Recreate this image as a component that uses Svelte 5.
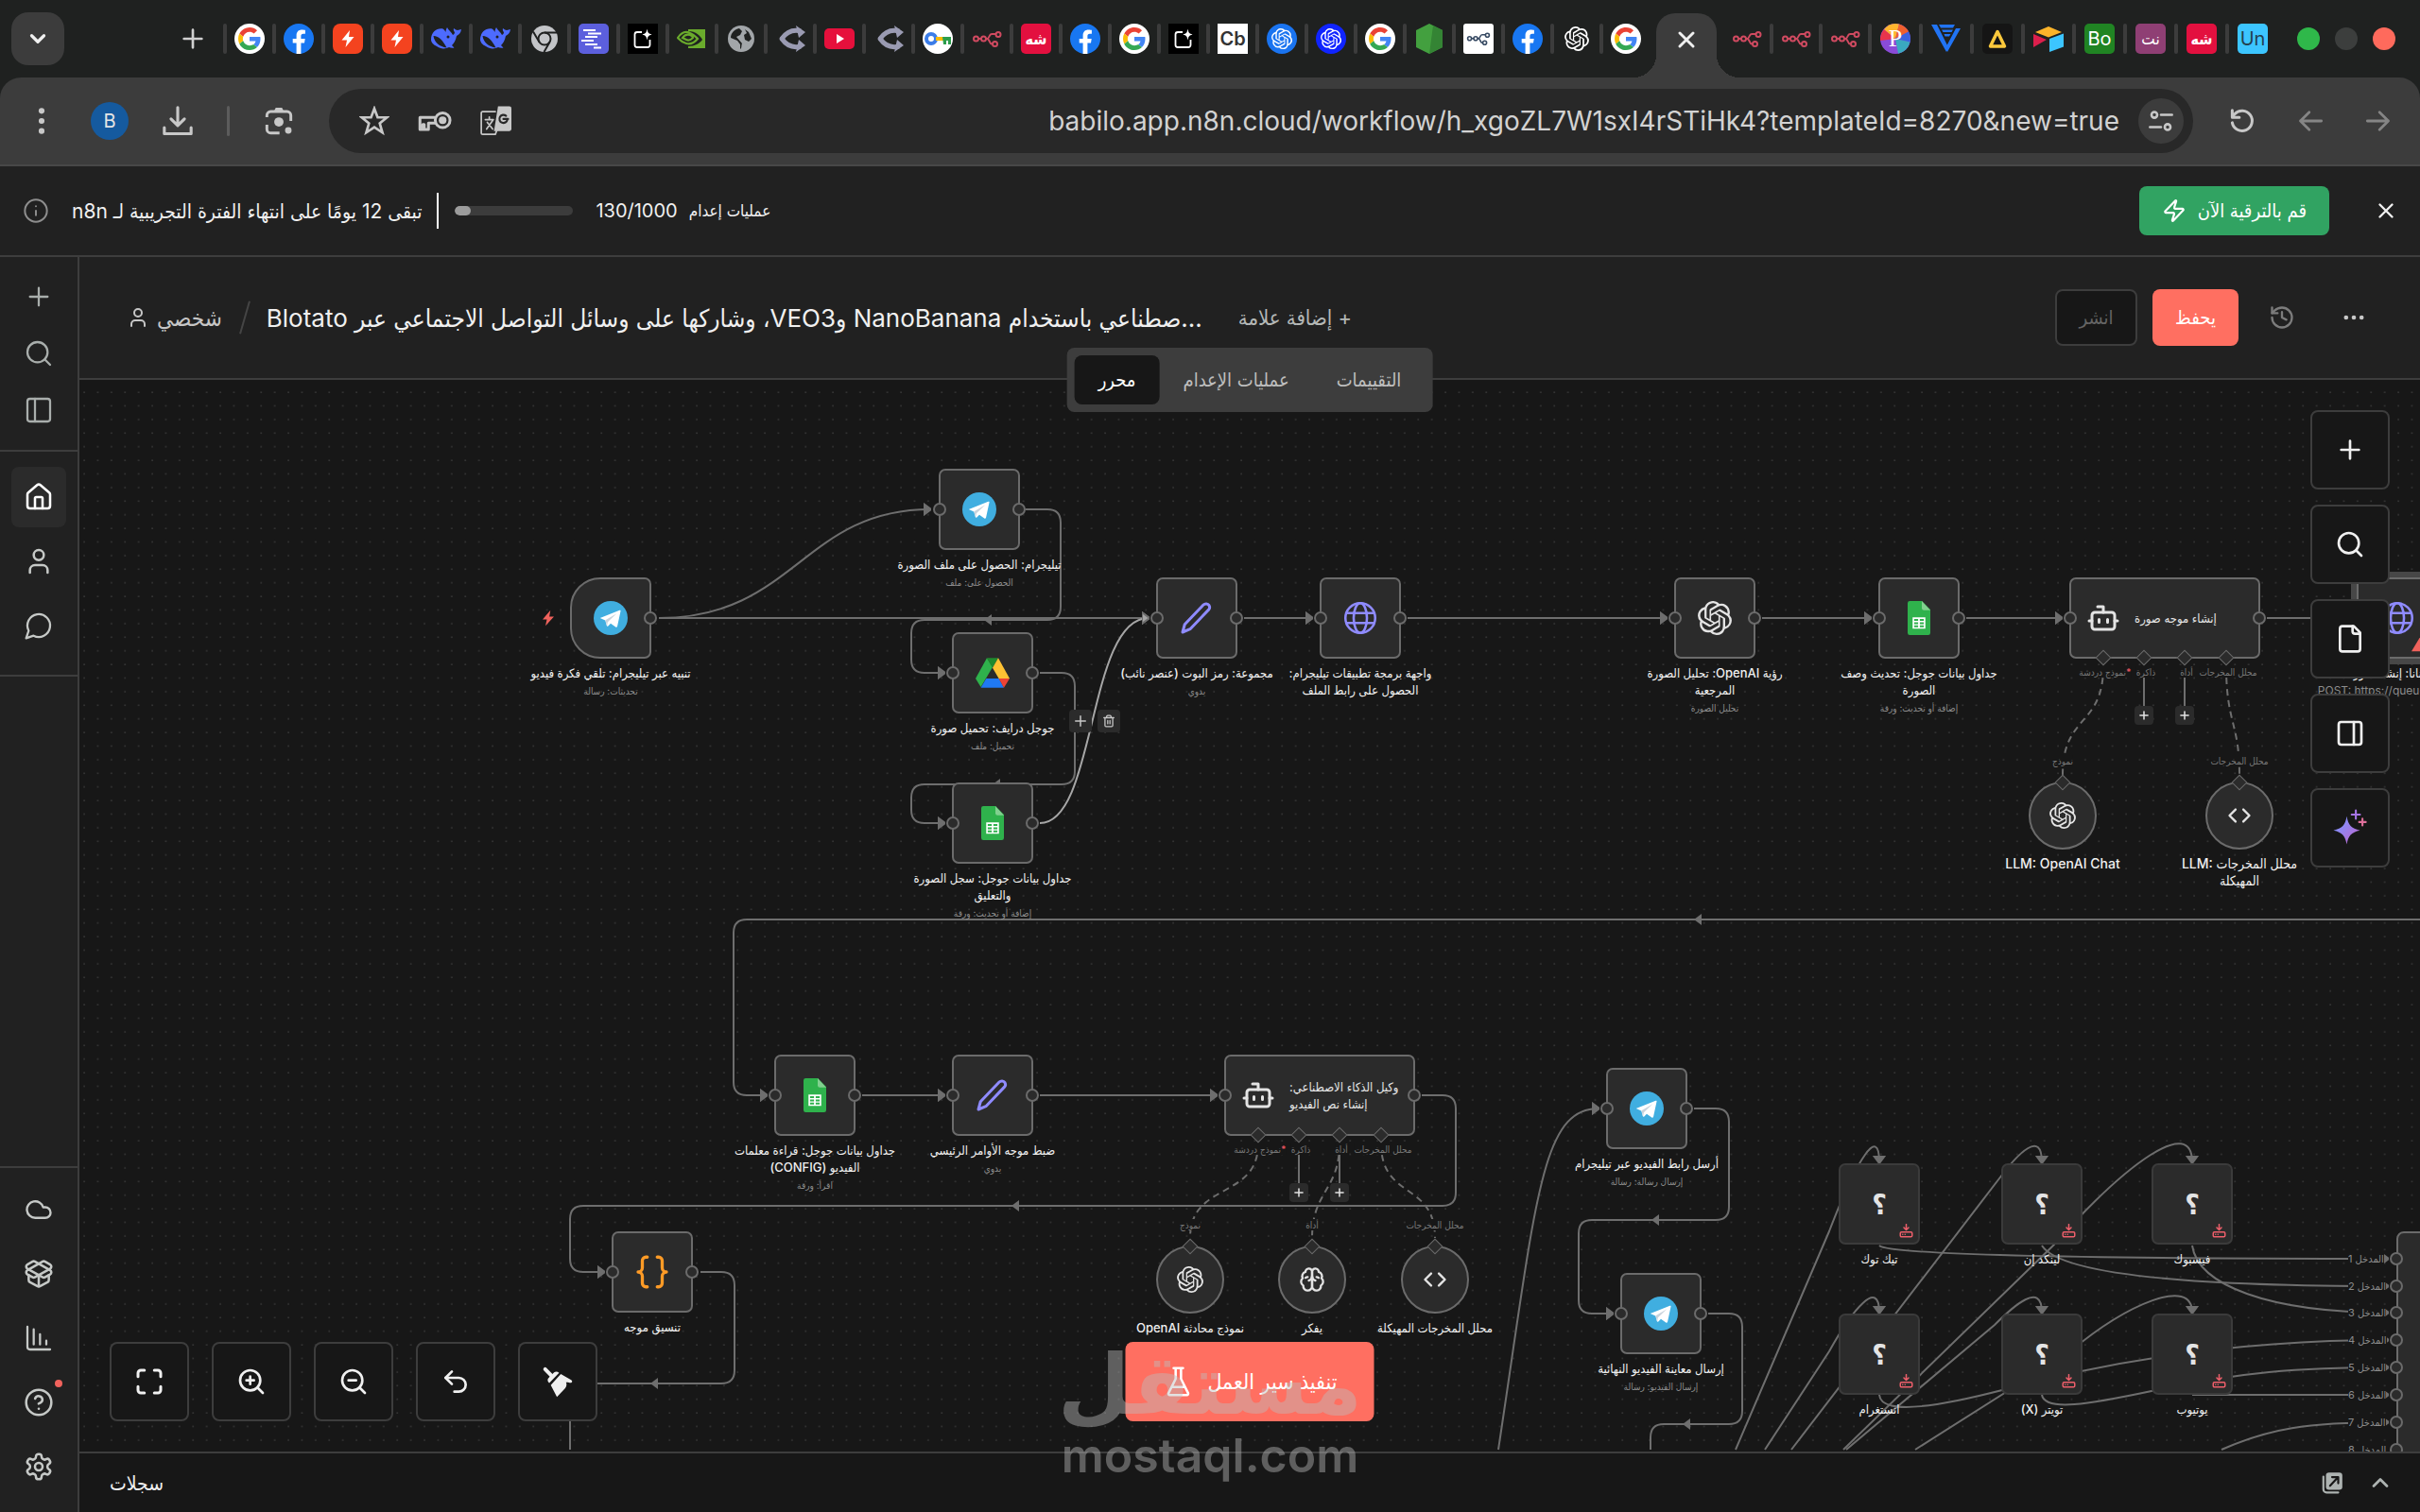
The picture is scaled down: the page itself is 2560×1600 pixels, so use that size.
<script lang="ts">
  type Node = {
    kind?: 'trigger' | 'agent' | 'missing' | 'circle' | 'selected';
    x: number;
    y: number;
    icon?: string;
    label?: string;
    dir?: 'ltr' | 'rtl';
    sub?: string;
    title?: string;
    port?: string;
  };

  const openai =
    '<path fill="currentColor" stroke="none" d="M22.2819 9.8211a5.9847 5.9847 0 0 0-.5157-4.9108 6.0462 6.0462 0 0 0-6.5098-2.9A6.0651 6.0651 0 0 0 4.9807 4.1818a5.9847 5.9847 0 0 0-3.9977 2.9 6.0462 6.0462 0 0 0 .7427 7.0966 5.98 5.98 0 0 0 .511 4.9107 6.051 6.051 0 0 0 6.5146 2.9001A5.9847 5.9847 0 0 0 13.2599 24a6.0557 6.0557 0 0 0 5.7718-4.2058 5.9894 5.9894 0 0 0 3.9977-2.9001 6.0557 6.0557 0 0 0-.7475-7.0729zm-9.022 12.6081a4.4755 4.4755 0 0 1-2.8764-1.0408l.1419-.0804 4.7783-2.7582a.7948.7948 0 0 0 .3927-.6813v-6.7369l2.02 1.1686a.071.071 0 0 1 .038.052v5.5826a4.504 4.504 0 0 1-4.4945 4.4944zm-9.6607-4.1254a4.4708 4.4708 0 0 1-.5346-3.0137l.142.0852 4.783 2.7582a.7712.7712 0 0 0 .7806 0l5.8428-3.3685v2.3324a.0804.0804 0 0 1-.0332.0615L9.74 19.9502a4.4992 4.4992 0 0 1-6.1408-1.6464zM2.3408 7.8956a4.485 4.485 0 0 1 2.3655-1.9728V11.6a.7664.7664 0 0 0 .3879.6765l5.8144 3.3543-2.0201 1.1685a.0757.0757 0 0 1-.071 0l-4.8303-2.7865A4.504 4.504 0 0 1 2.3408 7.872zm16.5963 3.8558L13.1038 8.364 15.1192 7.2a.0757.0757 0 0 1 .071 0l4.8303 2.7913a4.4944 4.4944 0 0 1-.6765 8.1042v-5.6772a.79.79 0 0 0-.407-.667zm2.0107-3.0231l-.142-.0852-4.7735-2.7818a.7759.7759 0 0 0-.7854 0L9.409 9.2297V6.8974a.0662.0662 0 0 1 .0284-.0615l4.8303-2.7866a4.4992 4.4992 0 0 1 6.6802 4.66zM8.3065 12.863l-2.02-1.1638a.0804.0804 0 0 1-.038-.0567V6.0742a4.4992 4.4992 0 0 1 7.3757-3.4537l-.142.0805L8.704 5.459a.7948.7948 0 0 0-.3927.6813zm1.0976-2.3654l2.602-1.4998 2.6069 1.4998v2.9994l-2.5974 1.4997-2.6067-1.4997Z"/>';

  // 24x24 stroke icons
  const icons: Record<string, string> = {
    plus: '<path d="M5 12h14M12 5v14"/>',
    search: '<circle cx="11" cy="11" r="8"/><path d="m21 21-4.3-4.3"/>',
    panelLeft: '<rect x="3" y="3" width="18" height="18" rx="2"/><path d="M9 3v18"/>',
    panelRight: '<rect x="3" y="3" width="18" height="18" rx="2"/><path d="M15 3v18"/>',
    home: '<path d="M15 21v-8a1 1 0 0 0-1-1h-4a1 1 0 0 0-1 1v8"/><path d="M3 10a2 2 0 0 1 .709-1.528l7-5.999a2 2 0 0 1 2.582 0l7 5.999A2 2 0 0 1 21 10v9a2 2 0 0 1-2 2H5a2 2 0 0 1-2-2z"/>',
    user: '<path d="M19 21v-2a4 4 0 0 0-4-4H9a4 4 0 0 0-4 4v2"/><circle cx="12" cy="7" r="4"/>',
    chat: '<path d="M7.9 20A9 9 0 1 0 4 16.1L2 22Z"/>',
    cloud: '<path d="M17.5 19H9a7 7 0 1 1 6.71-9h1.79a4.5 4.5 0 1 1 0 9Z"/>',
    box: '<path d="M12 22v-9"/><path d="M15.17 2.21a1.67 1.67 0 0 1 1.63 0L21 4.57a1.93 1.93 0 0 1 0 3.36L8.82 14.79a1.655 1.655 0 0 1-1.64 0L3 12.43a1.93 1.93 0 0 1 0-3.36z"/><path d="M20 13v3.87a2.06 2.06 0 0 1-1.11 1.83l-6 3.08a1.93 1.93 0 0 1-1.78 0l-6-3.08A2.06 2.06 0 0 1 4 16.87V13"/><path d="M21 12.43a1.93 1.93 0 0 0 0-3.36L8.83 2.2a1.64 1.64 0 0 0-1.63 0L3 4.57a1.93 1.93 0 0 0 0 3.36l12.18 6.86a1.636 1.636 0 0 0 1.63 0z"/>',
    chart: '<path d="M3 3v16a2 2 0 0 0 2 2h16"/><path d="M8 17V5M13 17V9M18 17v-3"/>',
    help: '<circle cx="12" cy="12" r="10"/><path d="M9.09 9a3 3 0 0 1 5.83 1c0 2-3 3-3 3"/><path d="M12 17h.01"/>',
    gear: '<path d="M12.22 2h-.44a2 2 0 0 0-2 2v.18a2 2 0 0 1-1 1.73l-.43.25a2 2 0 0 1-2 0l-.15-.08a2 2 0 0 0-2.73.73l-.22.38a2 2 0 0 0 .73 2.73l.15.1a2 2 0 0 1 1 1.72v.51a2 2 0 0 1-1 1.74l-.15.09a2 2 0 0 0-.73 2.73l.22.38a2 2 0 0 0 2.73.73l.15-.08a2 2 0 0 1 2 0l.43.25a2 2 0 0 1 1 1.73V20a2 2 0 0 0 2 2h.44a2 2 0 0 0 2-2v-.18a2 2 0 0 1 1-1.73l.43-.25a2 2 0 0 1 2 0l.15.08a2 2 0 0 0 2.73-.73l.22-.39a2 2 0 0 0-.73-2.73l-.15-.08a2 2 0 0 1-1-1.74v-.5a2 2 0 0 1 1-1.74l.15-.09a2 2 0 0 0 .73-2.73l-.22-.38a2 2 0 0 0-2.73-.73l-.15.08a2 2 0 0 1-2 0l-.43-.25a2 2 0 0 1-1-1.73V4a2 2 0 0 0-2-2z"/><circle cx="12" cy="12" r="3"/>',
    note: '<path d="M15 2H6a2 2 0 0 0-2 2v16a2 2 0 0 0 2 2h12a2 2 0 0 0 2-2V7Z"/><path d="M14 2v4a2 2 0 0 0 2 2h4"/>',
    sparkles: '<path fill="url(#spark)" stroke="none" d="M10 5c.9 5.3 2.7 7.3 8 8.5-5.3 1.2-7.1 3.2-8 8.5-.9-5.3-2.7-7.3-8-8.5 5.3-1.2 7.1-3.2 8-8.5z"/><g stroke-width="1.2"><path stroke="#a775e8" d="M15.5 1.500v5M13 4h5"/><path stroke="#e0709b" d="M19.500 6.500v4M17.500 8.500h4"/></g>',
    fit: '<path d="M4 8.5V6a2 2 0 0 1 2-2h2.5M15.5 4H18a2 2 0 0 1 2 2v2.5M20 15.5V18a2 2 0 0 1-2 2h-2.5M8.5 20H6a2 2 0 0 1-2-2v-2.5"/>',
    zoomIn: '<circle cx="11" cy="11" r="8"/><path d="m21 21-4.3-4.3M11 8v6M8 11h6"/>',
    zoomOut: '<circle cx="11" cy="11" r="8"/><path d="m21 21-4.3-4.3M8 11h6"/>',
    undo: '<path d="M9 14 4 9l5-5"/><path d="M4 9h10.5a5.5 5.5 0 0 1 0 11H11"/>',
    broom: '<path stroke-width="2.8" d="m2.600 2.800 5 5"/><path fill="currentColor" stroke="none" d="M4.500 10.800c0-1 .8-1.500 1.500-2.500l3.300-3.200c1.200-.9 2.700-.6 3.700.3L5.700 13c-.8-.5-1.200-1.300-1.200-2.200zM14.300 6.400l7.700 4.400c1.300.8.8 2.100-.4 2.100-1 .100-2-.7-3.400-.300.7 1.500.4 3-.600 4.300l-6.200 6.500-4.600-8.700z"/>',
    info: '<circle cx="12" cy="12" r="10"/><path d="M12 16v-4M12 8h.01"/>',
    zap: '<path d="M4 14a1 1 0 0 1-.78-1.63l9.9-10.2a.5.5 0 0 1 .86.46l-1.92 6.02A1 1 0 0 0 13 10h7a1 1 0 0 1 .78 1.63l-9.9 10.2a.5.5 0 0 1-.86-.46l1.92-6.02A1 1 0 0 0 11 14z"/>',
    close: '<path d="M18 6 6 18M6 6l12 12"/>',
    history: '<path d="M3 12a9 9 0 1 0 9-9 9.75 9.75 0 0 0-6.74 2.74L3 8"/><path d="M3 3v5h5M12 7v5l4 2"/>',
    dots: '<g fill="currentColor" stroke="none"><circle cx="5" cy="12" r="2"/><circle cx="12" cy="12" r="2"/><circle cx="19" cy="12" r="2"/></g>',
    kebab: '<g fill="currentColor" stroke="none"><circle cx="12" cy="4" r="2.3"/><circle cx="12" cy="12" r="2.3"/><circle cx="12" cy="20" r="2.3"/></g>',
    flask: '<path d="M10 2v7.53a2 2 0 0 1-.21.9L4.72 20.55a1 1 0 0 0 .9 1.45h12.76a1 1 0 0 0 .9-1.45l-5.07-10.12a2 2 0 0 1-.21-.9V2M8.5 2h7M7 16h10"/>',
    chevronDown: '<path d="m6 9 6 6 6-6"/>',
    chevronUp: '<path d="m6 15 6-6 6 6"/>',
    popout: '<rect x="6" y="2" width="16" height="17" rx="3" fill="#adb3b1" stroke="none"/><path d="M3.5 6v12.5a3 3 0 0 0 3 3H18"/><path stroke="#171717" d="m10 15 7.5-8M12 6.5h6v6"/>',
    download: '<path d="M12 2v13M7 10.5l5 5 5-5M2 17v4.5h20V17"/>',
    lens: '<path d="M2.500 9V7.500a3 3 0 0 1 3-3h13a3 3 0 0 1 3 3V12M2.500 15v3.500a3 3 0 0 0 3 3h7" stroke-linecap="butt"/><path fill="currentColor" stroke="none" d="M8 4.500 9.500 1.500h5L16 4.500z"/><circle cx="12" cy="12.800" r="3.700" fill="currentColor" stroke="none"/><circle cx="19.500" cy="19.500" r="2.600" fill="currentColor" stroke="none"/>',
    star: '<path d="m12 2.200 2.600 7H22l-5.700 4.700 2.100 7.300-6.400-4.200-6.400 4.200 2.100-7.300L2 9.200h7.400z" stroke-linejoin="miter"/>',
    key: '<circle cx="17.500" cy="11.500" r="5.200"/><circle cx="17.500" cy="11.500" r="2.700" fill="currentColor" stroke="none"/><path d="M12 9.500H1.500v8.500h2v-3.500h1V18h3v-4.500H12"/>',
    translate: '<path d="M12 5H2.500a1 1 0 0 0-1 1v15a1 1 0 0 0 1 1h9.500l1.500-4M4.500 11h6M7.500 9v2M5.500 18l5-7M6 13l4 5" stroke-width="1.200"/><path fill="currentColor" stroke="none" d="M14 1h8.500A1.500 1.500 0 0 1 24 2.500V18a1.500 1.500 0 0 1-1.500 1.500H11z"/><path stroke="#282828" stroke-width="1.500" d="M21.500 10.500h-3.500M21 11a3 3 0 1 1-1-2.800"/>',
    tune: '<circle cx="6" cy="6.5" r="2.6"/><path d="M12 6.5h10M2 17.5h10"/><circle cx="18" cy="17.5" r="2.6"/>',
    reload: '<path d="M3.5 13.5A8.5 8.5 0 1 0 5.5 6.2L3.5 8.5M3.5 3v6h6"/>',
    back: '<path d="m11 4-8 8 8 8M3 12h19"/>',
    forward: '<path d="m13 4 8 8-8 8M21 12H2"/>',
    trash: '<path d="M3 6h18M19 6v14a2 2 0 0 1-2 2H7a2 2 0 0 1-2-2V6M8 6V4a2 2 0 0 1 2-2h4a2 2 0 0 1 2 2v2M10 11v6M14 11v6"/>',
    openai,
    telegram: '<circle cx="12" cy="12" r="12" fill="#40aee0" stroke="none"/><path fill="#fff" stroke="none" d="M4.5 12 18.3 6.5c.5-.2.9.1.7.7l-2.3 10.7c-.2.7-.7.8-1.2.5L12 15.8l-1.8 1.9c-.4.4-.9.2-1-.3L8.2 13.6z"/><path fill="#c9d3dc" stroke="none" d="m8.3 13.5 1.1 4.2.5-2.9 6.3-6z"/>',
    drive: '<g stroke="none"><path fill="#2fb24c" d="M8 1.5 0 16l3.7 6L12 8z"/><path fill="#1f8a2e" d="M8 1.5h8L12 8.5z"/><path fill="#ffc233" d="M16 1.5 24 16h-7.6L12 8.5z"/><path fill="#2079f3" d="M3.7 22.5 7.5 16h9l3.5 6.5z"/><path fill="#ee4335" d="M16.4 16H24l-4 6.5z"/></g>',
    sheets: '<g stroke="none"><path fill="#2fb24c" d="M5.500 0H14l6 6v16.500a1.500 1.500 0 0 1-1.500 1.500h-13A1.500 1.500 0 0 1 4 22.500v-21A1.500 1.500 0 0 1 5.500 0z"/><path fill="#81d08f" d="M14 0l6 6.500h-4.500A1.500 1.500 0 0 1 14 5z"/><path fill="#fff" d="M7.5 11.500h9v8h-9z"/><path fill="#2fb24c" d="M8.6 12.7h2.800v1.300H8.600zM12.600 12.700h2.800v1.300h-2.800zM8.600 15h2.800v1.300H8.600zM12.600 15h2.800v1.300h-2.800zM8.600 17.200h2.800v1.300H8.600zM12.600 17.200h2.800v1.300h-2.800z"/></g>',
    pencil: '<path stroke="#8f8bff" stroke-width="2" d="M16.7 2.7a2.6 2.6 0 0 1 4 .4 2.600 2.600 0 0 1-.3 3L7.300 19.800 2 22l1.500-5.500z"/>',
    globe: '<g stroke="#8f8bff" stroke-width="1.7"><circle cx="12" cy="12" r="10.500"/><ellipse cx="12" cy="12" rx="4.700" ry="10.500"/><path d="M2.500 8.500h19M2.500 15.500h19"/></g>',
    bot: '<path d="M12 8V4H8"/><rect x="4" y="8" width="16" height="12" rx="2"/><path d="M2 14h2M20 14h2M15 13v2M9 13v2"/>',
    code: '<path d="m8.5 6.5-5.5 5.500 5.500 5.500M15.500 6.500l5.500 5.500-5.500 5.500"/>',
    brain: '<path d="M12 5a3 3 0 1 0-5.997.125 4 4 0 0 0-2.526 5.77 4 4 0 0 0 .556 6.588A4 4 0 1 0 12 18Z"/><path d="M12 5a3 3 0 1 1 5.997.125 4 4 0 0 1 2.526 5.77 4 4 0 0 1-.556 6.588A4 4 0 1 1 12 18Z"/><path d="M15 13a4.5 4.5 0 0 1-3-4 4.500 4.500 0 0 1-3 4M6 10.500c.5-.5 1-.8 2-.8M18 10.500c-.5-.5-1-.8-2-.8"/>',
    braces: '<path stroke="#ff9b26" stroke-width="2.2" d="M8.500 1.500h-1A2.500 2.500 0 0 0 5 4v5a3 3 0 0 1-3 3 3 3 0 0 1 3 3v5a2.500 2.500 0 0 0 2.500 2.500h1M15.500 1.500h1A2.500 2.500 0 0 1 19 4v5a3 3 0 0 0 3 3 3 3 0 0 0-3 3v5a2.500 2.500 0 0 1-2.500 2.500h-1"/>',
    install: '<path d="M12 1v9M8 6.500l4 4 4-4"/><rect x="2" y="14" width="20" height="8" rx="2"/><path d="M6 18h.01M10 18h.01"/>',
    bolt: '<path fill="#f0625c" stroke="none" d="M15 1 4 14h6L8 23l12-13h-6.500z"/>',
    warning: '<path fill="#f0625c" stroke="none" d="M12 2 24 22H0z"/>',
  };

  const n8n =
    '<g fill="none" stroke="COLOR" stroke-width="2"><circle cx="4.500" cy="16" r="2.500"/><circle cx="12.500" cy="16" r="2.500"/><circle cx="28" cy="11.500" r="2.500"/><circle cx="24.500" cy="21.500" r="2.500"/><path d="M7 16h3M15 16h1c3 0 2-5 5-5h4.500M16 16c3 0 2.500 5.500 5 5.500h1"/></g>';

  // 32x32 tab favicons
  const favicons: Record<string, string> = {
    google:
      '<circle cx="16" cy="16" r="16" fill="#fff"/><g transform="translate(4 4) scale(.5)"><path fill="#EA4335" d="M24 9.5c3.54 0 6.71 1.22 9.21 3.6l6.85-6.85C35.9 2.38 30.47 0 24 0 14.62 0 6.51 5.38 2.56 13.22l7.98 6.19C12.43 13.72 17.74 9.5 24 9.5z"/><path fill="#4285F4" d="M46.98 24.55c0-1.57-.15-3.09-.38-4.55H24v9.02h12.94c-.58 2.96-2.26 5.48-4.78 7.18l7.73 6c4.51-4.18 7.09-10.36 7.09-17.65z"/><path fill="#FBBC05" d="M10.53 28.59c-.48-1.45-.76-2.99-.76-4.59s.27-3.14.76-4.59l-7.98-6.19C.92 16.46 0 20.12 0 24c0 3.88.92 7.54 2.56 10.78l7.97-6.19z"/><path fill="#34A853" d="M24 48c6.48 0 11.93-2.13 15.89-5.81l-7.73-6c-2.15 1.45-4.92 2.3-8.16 2.3-6.26 0-11.57-4.22-13.47-9.91l-7.98 6.19C6.51 42.62 14.62 48 24 48z"/></g>',
    facebook:
      '<circle cx="16" cy="16" r="16" fill="#1877f2"/><path fill="#fff" d="m22 20.500.7-4.500h-4.300v-2.900c0-1.200.6-2.400 2.500-2.400h2V6.800s-1.800-.3-3.500-.3c-3.500 0-5.800 2.100-5.800 6V16H9.700v4.500h3.900V32h4.800V20.500z"/>',
    flash: '<rect width="32" height="32" rx="8" fill="#f4431f"/><path fill="#fff" d="m18 7-8.500 10.500H15L13.500 25 22.500 14H17z"/>',
    whale:
      '<path fill="#4d6bfe" d="M0 17C0 9 6 4.500 12.500 5.500c1.500 1 2.500 2.500 3 3.500 0-1.500.5-3.500 1.500-5 1 3 5 5 6 8 1-.5 2-1.500 2-3-1-1-1.500-2.500-1-4 1.500 1 3 2 4 2 1.500 0 2.500-1 4-1-.5 4-3 6-5 7-1 5-3 8-5 10l2.500 2.500c-2 .5-4 0-5.500-.5-4 2-9 2-13-1-3.500-1.500-6-4.500-6-7z"/><path fill="#1f2120" d="M2.500 13c6 0 10 5 14 12.500C9 24.500 3.500 20 2.500 13z"/><circle cx="18" cy="14" r="1.500" fill="#1f2120"/>',
    chrome:
      '<circle cx="16" cy="16" r="14" fill="#c3c5c8"/><circle cx="16" cy="16" r="6.500" fill="#c3c5c8" stroke="#1f2120" stroke-width="2"/><path fill="none" stroke="#1f2120" stroke-width="2" d="M16 9.500h13M10.500 19.500 4 8.500M21.500 19.500 15.500 30"/>',
    list: '<rect width="32" height="32" rx="5" fill="#5c5fdd"/><path stroke="#fff" stroke-width="2" d="M5 7h13M10 10.500h14M7 14h13M3 18h13M7 22h13M16 25.500h8"/>',
    capture:
      '<path fill="#000" d="M0 0h32v32H0z"/><path fill="none" stroke="#fff" stroke-width="1.800" d="M15 9h-5a2.500 2.500 0 0 0-2.500 2.500v11A2.500 2.500 0 0 0 10 25h11a2.500 2.500 0 0 0 2.500-2.500V17"/><path fill="#fff" d="M20.500 5.500c.7 4 1.500 5 5 6-3.500 1-4.300 2-5 6-.7-4-1.500-5-5-6 3.500-1 4.300-2 5-6z"/>',
    nvidia:
      '<path fill="#6aab2c" d="M12 6h18v20H12z"/><path fill="#1f2120" d="M12 8c8 0 13 5 15 9-3 4-8 7-15 7z"/><path fill="none" stroke="#6aab2c" stroke-width="2.2" d="M1 15c4-6 9-7 13-5 4 1.500 6 4 8 6-4 5-8 6-12 5-5-1-7-4-9-6zM6 15c2-3 5-4 8-3 2 .8 3 2 3 3-3 3-5 3-7 2z"/>',
    world:
      '<circle cx="16" cy="16" r="14" fill="#a2a6a9"/><path fill="#1f2120" d="M14 5c-5 1-9 5-9 10l7 3 3 4v5c2-1 1-4 2-6l-6-7 4-2 2-4zM20 6l4 3 3 7-3 3-4-2-1-5 3-2z"/>',
    curved:
      '<path fill="none" stroke="#9a9bb2" stroke-width="5" stroke-linejoin="round" d="M27 8c-8-2-15 1-20 8 5 7 12 10 20 8"/><path fill="#9a9bb2" d="m22 2 10 7-7 6zM22 30l10-7-7-6z"/>',
    youtube: '<rect y="5" width="32" height="22" rx="5" fill="#e6103c"/><path fill="#fff" d="m13 11 8 5-8 5z"/>',
    passkey:
      '<circle cx="16" cy="16" r="16" fill="#fff"/><circle cx="9" cy="16" r="5" fill="none" stroke="#3b7de8" stroke-width="4"/><path fill="#fbbc05" d="M14 14h8v4h-8z"/><path fill="#2c9d4b" d="M21 14h9v8h-3v-4h-2v4h-3z"/>',
    n8n: n8n.replace('COLOR', '#cf4a60'),
    n8nLight: '<rect width="32" height="32" rx="3" fill="#fff"/><g transform="translate(3 3) scale(.8)">' + n8n.replace('COLOR', '#374a63') + '</g>',
    gptBlue: `<circle cx="16" cy="16" r="16" fill="#1a74f0"/><g color="#fff" transform="translate(5 5) scale(.92)">${openai}</g>`,
    gptNavy: `<circle cx="16" cy="16" r="16" fill="#1024ff"/><g color="#fff" transform="translate(5 5) scale(.92)">${openai}</g>`,
    gpt: `<g color="#fff" transform="translate(3 3) scale(1.08)">${openai}</g>`,
    hex: '<path fill="#43a03f" d="m16 0 14 7v18l-14 7-14-7V7z"/><path fill="#348434" d="m20 2 10 5v18l-14 7z"/>',
    prism:
      '<circle cx="16" cy="16" r="16" fill="#8a4bd8"/><path fill="#e8344c" d="M16 16 0 18A16 16 0 0 1 4 6z"/><path fill="#ffb52e" d="M16 16 4 6A16 16 0 0 1 20 .500z"/><path fill="#f0602e" d="M16 16 20 .500a16 16 0 0 1 10 8z"/><path fill="#3b62e0" d="M16 16 30 8.500a16 16 0 0 1 1.500 11z"/><path fill="#3aa9c0" d="M16 16l15.500 3.500A16 16 0 0 1 19 31.700z"/>',
    vee: '<path fill="#2174f5" d="M0 1h6l12 24-2 5zM8 1h17l-2 3.500H10zM26 5h5L17 30l-1.500-5zM11 6.500h12l-1.500 2.500h-9zM13.500 11h7L19 13.500h-4.500z"/>',
    delta: '<rect width="32" height="32" rx="5" fill="#151515"/><path fill="none" stroke="#fcc93c" stroke-width="3.500" stroke-linejoin="round" d="M16 8.500 23.500 24H8.500z"/>',
    airtable: '<path fill="#fcb42a" d="M16 3 30 9l-14 5.500L2 9z"/><path fill="#3cc5ff" d="M17 16l15-5.500v14L17 30z"/><path fill="#dc1f4c" d="M0 11l14 6-14 8z"/>',
  };

  const leftTabs = 'google facebook flash flash whale whale chrome list capture nvidia world curved youtube curved passkey n8n t:شه:red facebook google capture t:Cb:white gptBlue gptNavy google hex n8nLight facebook gpt google'.split(' ');
  const rightTabs = 'n8n n8n n8n prism vee delta airtable t:Bo:green t:نت:plum t:شه:red t:Un:sky'.split(' ');

  const agentPorts = [
    { at: 36, label: 'نموذج دردشة', required: true },
    { at: 79, label: 'ذاكرة', add: true },
    { at: 122, label: 'أداة', add: true },
    { at: 166, label: 'محلل المخرجات' },
  ];

  // x / y are the centre of each node
  const nodes: Node[] = [
    { kind: 'trigger', x: 646, y: 654, icon: 'telegram', label: 'تنبيه عبر تيليجرام: تلقي فكرة فيديو', sub: 'تحديثات: رسالة' },
    { x: 1036, y: 539, icon: 'telegram', label: 'تيليجرام: الحصول على ملف الصورة', sub: 'الحصول على: ملف' },
    { x: 1050, y: 712, icon: 'drive', label: 'جوجل درايف: تحميل صورة', sub: 'تحميل: ملف' },
    { x: 1050, y: 871, icon: 'sheets', label: 'جداول بيانات جوجل: سجل الصورة\nوالتعليق', sub: 'إضافة أو تحديث: ورقة' },
    { x: 1266, y: 654, icon: 'pencil', label: 'مجموعة: رمز البوت (عنصر نائب)', sub: 'يدوي' },
    { x: 1439, y: 654, icon: 'globe', label: 'واجهة برمجة تطبيقات تيليجرام:\nالحصول على رابط الملف' },
    { x: 1814, y: 654, icon: 'openai', label: 'رؤية OpenAI: تحليل الصورة\nالمرجعية', sub: 'تحليل الصورة' },
    { x: 2030, y: 654, icon: 'sheets', label: 'جداول بيانات جوجل: تحديث وصف\nالصورة', sub: 'إضافة أو تحديث: ورقة' },
    { kind: 'agent', x: 2290, y: 654, icon: 'bot', title: 'إنشاء موجه صورة' },
    { kind: 'selected', x: 2536, y: 654, icon: 'globe', label: 'نانو بانانا: إنشاء صورة', sub: 'POST: https://queue.fal.run/...' },
    { kind: 'circle', x: 2182, y: 863, icon: 'openai', port: 'نموذج', label: 'LLM: OpenAI Chat', dir: 'ltr' },
    { kind: 'circle', x: 2369, y: 863, icon: 'code', port: 'محلل المخرجات', label: 'LLM: محلل المخرجات\nالمهيكلة', dir: 'ltr' },
    { x: 862, y: 1159, icon: 'sheets', label: 'جداول بيانات جوجل: قراءة معلمات\nالفيديو (CONFIG)', sub: 'اقرأ: ورقة' },
    { x: 1050, y: 1159, icon: 'pencil', label: 'ضبط موجه الأوامر الرئيسي', sub: 'يدوي' },
    { kind: 'agent', x: 1396, y: 1159, icon: 'bot', title: 'وكيل الذكاء الاصطناعي:\nإنشاء نص الفيديو' },
    { kind: 'circle', x: 1259, y: 1354, icon: 'openai', port: 'نموذج', label: 'نموذج محادثة OpenAI' },
    { kind: 'circle', x: 1388, y: 1354, icon: 'brain', port: 'أداة', label: 'يفكر' },
    { kind: 'circle', x: 1518, y: 1354, icon: 'code', port: 'محلل المخرجات', label: 'محلل المخرجات المهيكلة' },
    { x: 690, y: 1346, icon: 'braces', label: 'تنسيق موجه' },
    { x: 1742, y: 1173, icon: 'telegram', label: 'أرسل رابط الفيديو عبر تيليجرام', sub: 'إرسال رسالة: رسالة' },
    { x: 1757, y: 1390, icon: 'telegram', label: 'إرسال معاينة الفيديو النهائية', sub: 'إرسال الفيديو: رسالة' },
    { kind: 'missing', x: 1988, y: 1274, label: 'تيك توك' },
    { kind: 'missing', x: 2160, y: 1274, label: 'لينكد إن' },
    { kind: 'missing', x: 2319, y: 1274, label: 'فيسبوك' },
    { kind: 'missing', x: 1988, y: 1433, label: 'انستغرام' },
    { kind: 'missing', x: 2160, y: 1433, label: 'تويتر (X)' },
    { kind: 'missing', x: 2319, y: 1433, label: 'يوتيوب' },
  ];

  // drawn with an arrow head at the end
  const arrows = [
    'M697 654C840 654 850 539 984 539',
    'M697 654H1215',
    'M1085 539H1108Q1122 539 1122 553V642Q1122 656 1108 656H978Q964 656 964 670V698Q964 712 978 712H999',
    'M1100 712H1123Q1137 712 1137 726V816Q1137 830 1123 830H978Q964 830 964 844V857Q964 871 978 871H999',
    'M1316 654H1388',
    'M1489 654H1763',
    'M1864 654H1979',
    'M2080 654H2181',
    'M2560 973H790Q776 973 776 987V1145Q776 1159 790 1159H811',
    'M912 1159H999',
    'M1100 1159H1287',
    'M1504 1159H1526Q1540 1159 1540 1173V1262Q1540 1276 1526 1276H617Q603 1276 603 1290V1332Q603 1346 617 1346H639',
    'M1585 1534C1625 1270 1630 1173 1691 1173',
    'M1792 1173H1815Q1829 1173 1829 1187V1277Q1829 1291 1815 1291H1684Q1670 1291 1670 1305V1376Q1670 1390 1684 1390H1706',
    'M1836 1534L1935 1303C1965 1225 1988 1190 1988 1230',
    'M1895 1534L2115 1247C2135 1220 2160 1195 2160 1230',
    'M1950 1534L2172 1318C2250 1230 2319 1180 2319 1230',
    'M1867 1534L1935 1430C1960 1385 1988 1352 1988 1389',
    'M1953 1534L2110 1402C2130 1382 2160 1355 2160 1389',
    'M2026 1534L2190 1430C2250 1380 2319 1350 2319 1389',
    'M1988 1318C2000 1330 2300 1332 2526 1332',
    'M2160 1318C2180 1350 2330 1361 2526 1361',
    'M2319 1318C2325 1360 2400 1389 2526 1389',
    'M1988 1476C1990 1500 2060 1486 2118 1471C2240 1438 2380 1418 2526 1418',
    'M2160 1476C2163 1494 2210 1486 2276 1472C2370 1452 2430 1447 2526 1447',
    'M2319 1476H2526',
    'M2350 1534C2400 1512 2440 1505 2526 1505',
  ];

  const plain = [
    'M741 1346H763Q777 1346 777 1360V1450Q777 1464 763 1464H617Q603 1464 603 1478V1534',
    'M1807 1390H1829Q1843 1390 1843 1404V1493Q1843 1507 1829 1507H1760Q1746 1507 1746 1521V1534',
    'M2398 654H2490',
  ];

  const dashed = [
    'M2225 705C2225 770 2182 755 2182 820',
    'M2355 705C2355 765 2369 765 2369 820',
    'M1331 1210C1331 1270 1259 1250 1259 1310',
    'M1417 1210C1417 1260 1388 1260 1388 1310',
    'M1461 1210C1461 1270 1518 1250 1518 1310',
  ];

  const midArrows = [[1041, 656], [1050, 830], [1792, 973], [1070, 1276], [688, 1464], [1747, 1291], [1780, 1507]];
  const inputs = [1332, 1361, 1389, 1418, 1447, 1476, 1505, 1534];

  let url = 'babilo.app.n8n.cloud/workflow/h_xgoZL7W1sxI4rSTiHk4?templateId=8270&new=true';
</script>

{#snippet icon(name: string, size = 32, stroke = 2)}
  <svg
    width={size}
    height={size}
    viewBox="0 0 24 24"
    fill="none"
    stroke="currentColor"
    stroke-width={stroke}
    stroke-linecap="round"
    stroke-linejoin="round"
    aria-hidden="true">{@html icons[name]}</svg
  >
{/snippet}

{#snippet favicon(name: string)}
  {#if name.startsWith('t:')}
    <span class="letters {name.split(':')[2]}">{name.split(':')[1]}</span>
  {:else}
    <svg width="32" height="32" viewBox="0 0 32 32" aria-hidden="true">{@html favicons[name]}</svg>
    {#if name === 'prism'}<span class="prism-letter">P</span>{/if}
  {/if}
{/snippet}

<div class="screen">
  <div class="tab-strip">
    <button class="tab-search" aria-label="Search tabs">{@render icon('chevronDown', 26, 3)}</button>
    <button class="new-tab" aria-label="New tab">{@render icon('plus', 32, 2)}</button>
    {#each leftTabs as tab}
      <button class="tab" aria-label="Tab">{@render favicon(tab)}</button>
    {/each}
    <button class="tab-active" aria-label="Close tab">{@render icon('close', 28, 2.5)}</button>
    {#each rightTabs as tab, i}
      <button class="tab" class:bare={i === 0} class:wide={i > 2} aria-label="Tab">{@render favicon(tab)}</button>
    {/each}
    <div class="lights">
      <span class="light go"></span>
      <span class="light idle"></span>
      <span class="light stop"></span>
    </div>
  </div>

  <div class="toolbar">
    <button class="tool" aria-label="Menu">{@render icon('kebab', 32)}</button>
    <button class="tool" aria-label="Profile"><span class="avatar">B</span></button>
    <button class="tool" aria-label="Downloads">{@render icon('download', 34, 2.2)}</button>
    <span class="tool-line"></span>
    <button class="tool" aria-label="Lens">{@render icon('lens', 32, 2.2)}</button>
    <div class="address">
      <button class="inner" aria-label="Bookmark">{@render icon('star', 32, 2)}</button>
      <button class="inner" aria-label="Passwords">{@render icon('key', 36, 2)}</button>
      <button class="inner" aria-label="Translate">{@render icon('translate', 34, 2)}</button>
      <input aria-label="Address" bind:value={url} />
      <button class="tune" aria-label="Site settings">{@render icon('tune', 28, 2.2)}</button>
    </div>
    <button class="tool" aria-label="Reload">{@render icon('reload', 30, 2.4)}</button>
    <button class="tool dim" aria-label="Back">{@render icon('back', 28, 2.4)}</button>
    <button class="tool dim" aria-label="Forward">{@render icon('forward', 28, 2.4)}</button>
  </div>

  <div class="banner">
    <span class="info">{@render icon('info', 28, 1.7)}</span>
    <span class="trial" dir="rtl">تبقى 12 يومًا على انتهاء الفترة التجريبية لـ n8n</span>
    <span class="banner-line"></span>
    <div class="progress"><div class="progress-fill" style="width: {130 / 10}%"></div></div>
    <span class="usage">130/1000</span>
    <span class="usage-label" dir="rtl">عمليات إعدام</span>
    <button class="upgrade">{@render icon('zap', 26, 2)}<span>قم بالترقية الآن</span></button>
    <button class="dismiss" aria-label="Dismiss">{@render icon('close', 26, 2.2)}</button>
  </div>

  <div class="body">
    <nav class="sidebar">
      <div class="side-group top">
        <button aria-label="Create">{@render icon('plus', 32, 1.7)}</button>
        <button aria-label="Search">{@render icon('search', 32, 1.7)}</button>
        <button aria-label="Toggle sidebar">{@render icon('panelLeft', 32, 1.7)}</button>
      </div>
      <div class="side-group main">
        <a class="current" href="#home" aria-label="Home">{@render icon('home', 32, 1.9)}</a>
        <a href="#personal" aria-label="Personal">{@render icon('user', 32, 1.9)}</a>
        <a href="#chat" aria-label="Chat">{@render icon('chat', 32, 1.7)}</a>
      </div>
      <div class="side-group bottom">
        <a href="#admin" aria-label="Cloud">{@render icon('cloud', 30, 1.9)}</a>
        <a href="#templates" aria-label="Templates">{@render icon('box', 32, 1.9)}</a>
        <a href="#insights" aria-label="Insights">{@render icon('chart', 32, 1.7)}</a>
        <a class="alert" href="#help" aria-label="Help">{@render icon('help', 32, 1.9)}</a>
        <a href="#settings" aria-label="Settings">{@render icon('gear', 32, 1.9)}</a>
      </div>
    </nav>

    <main>
      <header>
        <a class="project" href="#personal">{@render icon('user', 24, 2)}<span>شخصي</span></a>
        <span class="slash"></span>
        <h1 dir="rtl">...صطناعي باستخدام NanoBanana وVEO3، وشاركها على وسائل التواصل الاجتماعي عبر Blotato</h1>
        <button class="add-tag" dir="rtl">+ إضافة علامة</button>
        <div class="header-actions">
          <button class="publish" disabled>انشر</button>
          <button class="save">يحفظ</button>
          <button class="ghost history" aria-label="History">{@render icon('history', 28, 2)}</button>
          <button class="ghost" aria-label="More">{@render icon('dots', 28)}</button>
        </div>
        <div class="view-tabs">
          <button class="on">محرر</button>
          <button>عمليات الإعدام</button>
          <button>التقييمات</button>
        </div>
      </header>

      <section class="canvas">
        <svg class="grid" aria-hidden="true">
          <defs>
            <pattern id="dots" width="16" height="16" patternUnits="userSpaceOnUse" patternTransform="translate(4 12) scale(.9)">
              <circle cx="1.2" cy="1.2" r="1" fill="#383838" />
            </pattern>
            <linearGradient id="spark" x1="0" y1="0" x2="1" y2="1">
              <stop offset="0.3" stop-color="#8b8cf8" />
              <stop offset="0.75" stop-color="#b06fd8" />
            </linearGradient>
          </defs>
          <rect width="100%" height="100%" fill="url(#dots)" />
        </svg>

        <div class="world">
          <svg class="edges" width="2560" height="1600" aria-hidden="true">
            <defs>
              <marker id="head" markerWidth="8" markerHeight="14" refX="7" refY="7" orient="auto" markerUnits="userSpaceOnUse">
                <path d="M0 1 8 7 0 13z" fill="#6e6e6e" />
              </marker>
              <marker id="head-active" markerWidth="8" markerHeight="14" refX="7" refY="7" orient="0" markerUnits="userSpaceOnUse">
                <path d="M0 1 8 7 0 13z" fill="#a6a6a6" />
              </marker>
            </defs>
            {#each plain as d}<path {d} />{/each}
            {#each arrows as d}<path {d} marker-end="url(#head)" />{/each}
            {#each dashed as d}<path {d} stroke-dasharray="7 5" />{/each}
            <path class="active" d="M1100 871C1160 871 1150 654 1215 654" marker-end="url(#head-active)" />
            {#each midArrows as [x, y]}<path class="mid" d="M{x} {y}l8-6v12z" />{/each}
          </svg>

          <div class="merge"></div>
          {#each inputs as y, i}
            <span class="input-label" dir="rtl" style="top: {y}px">المدخل {i + 1}</span>
            <span class="input-port" style="top: {y}px"></span>
          {/each}

          {#each nodes as node}
            <div class="node {node.kind ?? 'regular'}" style="left: {node.x}px; top: {node.y}px">
              {#if node.kind === 'trigger'}<span class="trigger-mark">{@render icon('bolt', 18)}</span>{/if}
              <div class="box">
                {#if node.kind === 'missing'}
                  <span class="question">؟</span>
                  <span class="install">{@render icon('install', 15, 2.4)}</span>
                {:else if node.icon}
                  {@render icon(node.icon, node.kind === 'circle' ? 28 : 36)}
                {/if}
                {#if node.kind === 'selected'}<span class="warning">{@render icon('warning', 22)}</span>{/if}
                {#if node.title}<span class="title" dir="rtl">{node.title}</span>{/if}
                {#if node.kind === 'agent'}
                  {#each agentPorts as port}
                    <span class="diamond low" style="left: {port.at}px"></span>
                    <span class="port-label low" dir="rtl" style="left: {port.at}px"
                      >{#if port.required}<b>*</b>{/if}{port.label}</span
                    >
                    {#if port.add}
                      <button class="add-port" aria-label="Add {port.label}" style="left: {port.at}px"
                        >{@render icon('plus', 14, 2.6)}</button
                      >
                    {/if}
                  {/each}
                {/if}
                {#if node.kind === 'circle'}
                  <span class="diamond high"></span>
                  <span class="port-label high" dir="rtl">{node.port}</span>
                {:else if node.kind !== 'missing'}
                  {#if node.kind !== 'trigger' && node.kind !== 'selected'}<span class="port in"></span>{/if}
                  <span class="port out"></span>
                {/if}
              </div>
              {#if node.label}
                <div class="caption">
                  <p class="label {node.dir ?? 'rtl'}" dir={node.dir ?? 'rtl'}>{node.label}</p>
                  {#if node.sub}<p class="sub" class:request={node.kind === 'selected'} dir="auto">{node.sub}</p>{/if}
                </div>
              {/if}
            </div>
          {/each}

          <div class="edge-tools">
            <button aria-label="Add node">{@render icon('plus', 18, 2)}</button>
            <button aria-label="Delete connection">{@render icon('trash', 14, 2.2)}</button>
          </div>
        </div>

        <div class="controls side">
          <button aria-label="Add">{@render icon('plus')}</button>
          <button aria-label="Find">{@render icon('search')}</button>
          <button aria-label="Sticky note">{@render icon('note')}</button>
          <button aria-label="Panel">{@render icon('panelRight')}</button>
          <button aria-label="Assistant">{@render icon('sparkles', 42)}</button>
        </div>
        <div class="controls low">
          <button aria-label="Fit view">{@render icon('fit', 36)}</button>
          <button aria-label="Zoom in">{@render icon('zoomIn')}</button>
          <button aria-label="Zoom out">{@render icon('zoomOut')}</button>
          <button aria-label="Undo">{@render icon('undo')}</button>
          <button aria-label="Tidy up">{@render icon('broom', 34)}</button>
        </div>
        <button class="execute">{@render icon('flask', 34, 1.8)}<span>تنفيذ سير العمل</span></button>
      </section>

      <footer>
        <span>سجلات</span>
        <button aria-label="Pop out">{@render icon('popout', 26, 2)}</button>
        <button aria-label="Expand">{@render icon('chevronUp', 28, 2.4)}</button>
      </footer>
    </main>
  </div>

  <div class="watermark" aria-hidden="true">
    <span class="mark-arabic">مستقل</span>
    <span class="mark-latin">mostaql.com</span>
  </div>
</div>

<style>
  :global(body) {
    margin: 0;
    background: #171717;
  }

  .screen {
    position: relative;
    display: flex;
    flex-direction: column;
    height: 100vh;
    overflow: hidden;
    color: #f0f0f0;
    font-family: Inter, 'DejaVu Sans Condensed', 'DejaVu Sans', sans-serif;
    font-size: 20px;
  }

  .screen :global(svg) {
    display: block;
    flex: none;
  }

  button {
    display: flex;
    align-items: center;
    justify-content: center;
    padding: 0;
    border: 0;
    background: none;
    color: inherit;
    font: inherit;
  }

  a {
    color: inherit;
    text-decoration: none;
  }

  /* browser tabs */
  .tab-strip {
    display: flex;
    flex: none;
    align-items: center;
    height: 82px;
    padding: 0 26px 0 12px;
    background: #1f2120;
  }

  .tab-search {
    width: 56px;
    height: 56px;
    border-radius: 18px;
    background: #3c3c3c;
  }

  .new-tab {
    width: 68px;
    margin-left: 102px;
    color: #d0d0d0;
  }

  .tab {
    position: relative;
    width: 52px;
    height: 32px;
  }

  .tab.wide {
    width: 54px;
  }

  .tab::before {
    content: '';
    position: absolute;
    left: -2px;
    width: 4px;
    height: 32px;
    border-radius: 2px;
    background: #3c3c3c;
  }

  .tab.bare::before {
    display: none;
  }

  .tab-active {
    position: relative;
    align-self: flex-end;
    width: 64px;
    height: 68px;
    margin: 0 6px;
    padding-bottom: 12px;
    box-sizing: border-box;
    border-radius: 20px 20px 0 0;
    background: #3c3c3c;
  }

  .tab-active::before,
  .tab-active::after {
    content: '';
    position: absolute;
    bottom: 0;
    width: 24px;
    height: 24px;
  }

  .tab-active::before {
    right: 100%;
    background: radial-gradient(circle at 0 0, transparent 24px, #3c3c3c 24px);
  }

  .tab-active::after {
    left: 100%;
    background: radial-gradient(circle at 100% 0, transparent 24px, #3c3c3c 24px);
  }

  .letters {
    display: flex;
    align-items: center;
    justify-content: center;
    width: 32px;
    height: 32px;
    border-radius: 5px;
    color: #fff;
    font-size: 20px;
    line-height: 32px;
  }

  .red {
    background: #e3103f;
    font-weight: 700;
    font-size: 16px;
  }

  .white {
    border-radius: 0;
    background: #fff;
    color: #333;
    font-weight: 600;
  }

  .green {
    background: #208423;
  }

  .plum {
    background: #8f3f74;
    font-size: 17px;
  }

  .sky {
    background: #3cc5ff;
    color: #23404f;
  }

  .prism-letter {
    position: absolute;
    color: #fff;
    font-family: 'Liberation Serif', serif;
    font-size: 26px;
  }

  .lights {
    display: flex;
    gap: 16px;
    margin-left: auto;
  }

  .light {
    width: 24px;
    height: 24px;
    border-radius: 50%;
  }

  .go {
    background: #2fb84a;
  }

  .idle {
    background: #3c3e3d;
  }

  .stop {
    background: #ff6a5c;
  }

  /* browser toolbar */
  .toolbar {
    display: flex;
    flex: none;
    align-items: center;
    height: 92px;
    padding: 0 8px;
    border-bottom: 2px solid #484848;
    border-radius: 22px 22px 0 0;
    background: #3c3c3c;
    box-shadow: 0 -22px 0 #1f2120;
    color: #c8c8c8;
    clip-path: inset(0);
  }

  .tool {
    width: 72px;
    height: 48px;
  }

  .avatar {
    width: 40px;
    border-radius: 50%;
    background: #155a9f;
    color: #e4e4e4;
    line-height: 40px;
  }

  .tool-line {
    width: 3px;
    height: 32px;
    margin: 0 16px;
    border-radius: 2px;
    background: #5c5c5c;
  }

  .dim {
    color: #858585;
  }

  .address {
    display: flex;
    flex: 1;
    align-items: center;
    height: 68px;
    margin: 0 16px 0 17px;
    padding: 0 10px 0 16px;
    border-radius: 34px;
    background: #282828;
  }

  .inner {
    width: 64px;
    height: 48px;
  }

  .address input {
    flex: 1;
    min-width: 0;
    margin-right: 20px;
    padding: 0;
    border: 0;
    outline: 0;
    background: none;
    color: #d2d2d2;
    font: inherit;
    font-size: 28px;
    text-align: right;
  }

  .tune {
    width: 48px;
    height: 48px;
    border-radius: 50%;
    background: #3c3c3c;
  }

  /* trial banner */
  .banner {
    display: flex;
    flex: none;
    align-items: center;
    height: 94px;
    padding: 0 20px 0 24px;
    border-bottom: 2px solid #3d3d3d;
    background: #212121;
  }

  .info {
    color: #8e8e8e;
  }

  .trial {
    margin-left: 24px;
    font-size: 21px;
  }

  .banner-line {
    width: 2px;
    height: 38px;
    margin: 0 17px 0 16px;
    background: #fff;
  }

  .progress {
    width: 125px;
    height: 10px;
    margin-right: 24px;
    border-radius: 5px;
    background: #3c3c3c;
    overflow: hidden;
  }

  .progress-fill {
    height: 10px;
    border-radius: 5px;
    background: #9c9c9c;
  }

  .usage-label {
    margin-left: 12px;
    font-size: 17px;
  }

  .upgrade {
    gap: 12px;
    height: 52px;
    margin-left: auto;
    padding: 0 24px;
    border-radius: 8px;
    background: #31a362;
    color: #fff;
  }

  .dismiss {
    width: 32px;
    height: 32px;
    margin-left: 44px;
  }

  .body {
    display: flex;
    flex: 1;
    min-height: 0;
  }

  /* sidebar */
  .sidebar {
    display: flex;
    flex: none;
    flex-direction: column;
    width: 82px;
    border-right: 2px solid #3d3d3d;
    background: #212121;
    color: #c6c9c7;
  }

  .side-group {
    display: flex;
    flex-direction: column;
    align-items: center;
  }

  .top {
    gap: 28px;
    padding: 26px 0;
    color: #a9aeac;
  }

  .main {
    gap: 4px;
    padding: 16px 0 20px;
    border-top: 2px solid #3d3d3d;
    border-bottom: 2px solid #3d3d3d;
  }

  .bottom {
    gap: 4px;
    margin-top: auto;
    padding: 12px 0 16px;
    border-top: 2px solid #3d3d3d;
  }

  .sidebar a {
    display: flex;
    align-items: center;
    justify-content: center;
    width: 58px;
    height: 64px;
    border-radius: 8px;
  }

  .sidebar .current {
    background: #2b2b2b;
    color: #fff;
  }

  .alert {
    position: relative;
  }

  .alert::after {
    content: '';
    position: absolute;
    top: 8px;
    right: 4px;
    width: 8px;
    height: 8px;
    border-radius: 50%;
    background: #f0625c;
  }

  main {
    display: flex;
    flex: 1;
    flex-direction: column;
    min-width: 0;
  }

  /* workflow header */
  header {
    position: relative;
    z-index: 2;
    display: flex;
    flex: none;
    align-items: center;
    height: 128px;
    padding: 0 46px 0 50px;
    border-bottom: 2px solid #3d3d3d;
    background: #212121;
  }

  .project {
    display: flex;
    align-items: center;
    gap: 8px;
    color: #c6c6c6;
    font-size: 24px;
  }

  .slash {
    width: 2px;
    height: 36px;
    margin: 0 22px 0 23px;
    background: #454545;
    transform: rotate(16deg);
  }

  h1 {
    margin: 0;
    font-size: 26px;
    font-weight: 400;
    white-space: nowrap;
  }

  .add-tag {
    margin-left: 38px;
    color: #b4b8b6;
    font-size: 22px;
  }

  .header-actions {
    display: flex;
    align-items: center;
    margin-left: auto;
  }

  .publish,
  .save {
    box-sizing: border-box;
    height: 60px;
    border-radius: 8px;
  }

  .publish {
    width: 87px;
    margin-right: 16px;
    border: 2px solid #3d3d3d;
    background: #171717;
    color: #646464;
  }

  .save {
    width: 91px;
    margin-right: 22px;
    background: #ff6f61;
    color: #fff;
  }

  .ghost {
    width: 48px;
    height: 48px;
    color: #c8c8c8;
  }

  .history {
    margin-right: 28px;
    color: #7c7c7c;
  }

  .view-tabs {
    position: absolute;
    bottom: -36px;
    left: 50%;
    display: flex;
    padding: 8px;
    border-radius: 8px;
    background: #3d3d3d;
    transform: translateX(-50%);
  }

  .view-tabs button {
    height: 52px;
    padding: 0 25px;
    border-radius: 8px;
    color: #bdbdbd;
  }

  .view-tabs .on {
    background: #171717;
    color: #fff;
  }

  /* canvas */
  .canvas {
    position: relative;
    flex: 1;
    min-height: 0;
    background: #171717;
    overflow: hidden;
  }

  .grid {
    position: absolute;
    width: 100%;
    height: 100%;
  }

  .world {
    position: absolute;
    top: -402px;
    left: -84px;
  }

  .edges {
    position: absolute;
    fill: none;
    stroke: #6e6e6e;
    stroke-width: 2;
  }

  .edges .active {
    stroke: #a6a6a6;
  }

  .edges .mid {
    fill: #6e6e6e;
    stroke: none;
  }

  .node {
    position: absolute;
    width: 86px;
    height: 86px;
    transform: translate(-50%, -50%);
  }

  .box {
    position: relative;
    display: flex;
    align-items: center;
    justify-content: center;
    box-sizing: border-box;
    width: 100%;
    height: 100%;
    border: 2px solid #6b6b6b;
    border-radius: 7px;
    background: #2b2b2b;
    color: #e4e4e4;
  }

  .trigger .box {
    border-radius: 32px 7px 7px 32px;
  }

  .trigger-mark {
    position: absolute;
    top: 34px;
    right: 100%;
    margin-right: 14px;
  }

  .missing .box {
    border-color: #3b3b3b;
  }

  .selected .box {
    box-shadow: 0 0 0 6px #474747;
  }

  .warning {
    position: absolute;
    right: 4px;
    bottom: 4px;
  }

  .agent {
    width: 202px;
  }

  .agent .box {
    justify-content: flex-start;
    gap: 15px;
    padding-left: 16px;
  }

  .circle {
    width: 72px;
    height: 72px;
  }

  .circle .box {
    border-radius: 50%;
  }

  .title {
    font-size: 13px;
    line-height: 18px;
    text-align: left;
    white-space: pre;
  }

  .question {
    font-size: 30px;
    font-weight: 700;
    line-height: 32px;
  }

  .install {
    position: absolute;
    right: 5px;
    bottom: 5px;
    color: #ee5f6b;
  }

  .port,
  .input-port {
    position: absolute;
    box-sizing: border-box;
    width: 14px;
    height: 14px;
    border: 2px solid #6b6b6b;
    border-radius: 50%;
    background: #2b2b2b;
  }

  .port.in {
    left: -8px;
  }

  .port.out {
    right: -8px;
  }

  .diamond {
    position: absolute;
    box-sizing: border-box;
    width: 12px;
    height: 12px;
    margin-left: -8px;
    border: 1px solid #6b6b6b;
    background: #2b2b2b;
    transform: rotate(45deg);
  }

  .diamond.low {
    bottom: -7px;
  }

  .diamond.high {
    top: -7px;
    left: 50%;
    margin-left: -6px;
  }

  .port-label {
    position: absolute;
    background: #171717;
    color: #777;
    font-size: 10px;
    line-height: 12px;
    white-space: nowrap;
    transform: translateX(-50%);
  }

  .port-label.low {
    top: 92px;
  }

  .port-label.high {
    bottom: 86px;
    left: 50%;
  }

  .port-label b {
    color: #e0525d;
  }

  .add-port {
    position: absolute;
    top: 134px;
    width: 20px;
    height: 20px;
    margin-left: -12px;
    border-radius: 4px;
    background: #2b2b2b;
  }

  .add-port::before {
    content: '';
    position: absolute;
    bottom: 100%;
    width: 2px;
    height: 30px;
    background: #6e6e6e;
  }

  .caption {
    position: absolute;
    top: 100%;
    left: 50%;
    padding-top: 6px;
    text-align: center;
    transform: translateX(-50%);
  }

  .caption p {
    margin: 0;
    white-space: pre;
  }

  .label {
    font-size: 13px;
    font-weight: 500;
    line-height: 18px;
  }

  .label.ltr {
    font-size: 14px;
  }

  .sub {
    color: #8c8c8c;
    font-size: 10px;
    line-height: 20px;
  }

  .sub.request {
    font-size: 12px;
  }

  .merge {
    position: absolute;
    top: 1303px;
    left: 2535px;
    width: 87px;
    height: 320px;
    border: 2px solid #6b6b6b;
    border-radius: 8px;
    background: #2b2b2b;
  }

  .input-port {
    left: 2528px;
    transform: translateY(-50%);
  }

  .input-label {
    position: absolute;
    left: 2484px;
    background: #171717;
    color: #8c8c8c;
    font-size: 11px;
    line-height: 14px;
    white-space: nowrap;
    transform: translateY(-50%);
  }

  .edge-tools {
    position: absolute;
    top: 751px;
    left: 1131px;
    display: flex;
    gap: 6px;
  }

  .edge-tools button {
    width: 24px;
    height: 24px;
    border-radius: 4px;
    background: #2b2b2b;
    color: #c8c8c8;
  }

  .controls {
    position: absolute;
    display: flex;
  }

  .controls button {
    box-sizing: border-box;
    width: 84px;
    height: 84px;
    border: 2px solid #3d3d3d;
    border-radius: 8px;
    background: #171717;
  }

  .controls.side {
    top: 32px;
    right: 32px;
    flex-direction: column;
    gap: 16px;
  }

  .controls.low {
    bottom: 32px;
    left: 32px;
    gap: 24px;
  }

  .execute {
    position: absolute;
    bottom: 32px;
    left: 50%;
    gap: 14px;
    width: 263px;
    height: 84px;
    border-radius: 8px;
    background: #ff6f61;
    color: #fff;
    font-size: 23px;
    transform: translateX(-50%);
  }

  footer {
    display: flex;
    flex: none;
    align-items: center;
    gap: 24px;
    height: 62px;
    padding: 0 28px 0 32px;
    border-top: 2px solid #3d3d3d;
    background: #171717;
    color: #adb3b1;
  }

  footer span {
    margin-right: auto;
    color: #f0f0f0;
    font-size: 21px;
  }

  .watermark {
    position: absolute;
    bottom: 30px;
    left: 50%;
    z-index: 3;
    display: flex;
    flex-direction: column;
    align-items: center;
    color: #bebebe;
    opacity: 0.43;
    pointer-events: none;
    transform: translateX(-50%);
  }

  .mark-arabic {
    font-family: 'DejaVu Sans', sans-serif;
    font-size: 88px;
    font-weight: 700;
    line-height: 88px;
  }

  .mark-latin {
    font-size: 50px;
    font-weight: 600;
    line-height: 60px;
  }
</style>
